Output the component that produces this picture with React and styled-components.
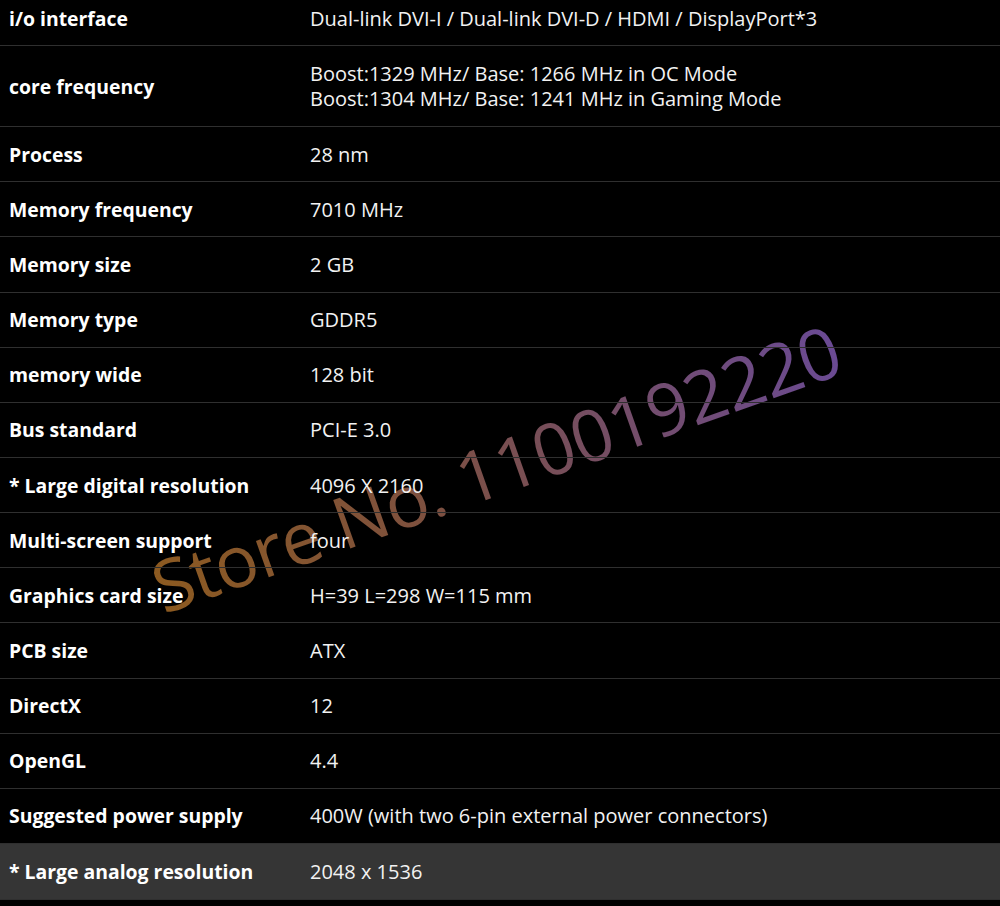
import React from "react";
import styled, { createGlobalStyle } from "styled-components";

const GlobalStyle = createGlobalStyle`
  html, body {
    margin: 0;
    padding: 0;
    background: #000;
  }
  body {
    font-family: "Open Sans", "Noto Sans", "Liberation Sans", sans-serif;
    color: #fff;
    overflow: hidden;
  }
`;

const Page = styled.div`
  position: relative;
  width: 1000px;
  height: 906px;
  overflow: hidden;
  background: #000;
`;

const Table = styled.div`
  position: relative;
  z-index: 1;
  display: flex;
  flex-direction: column;
  margin-top: -9px;
`;

const Row = styled.div`
  display: grid;
  grid-template-columns: 301px 1fr;
  align-items: center;
  min-height: ${(p) => (p.tall ? "80px" : p.shaded ? "55px" : "54.15px")};
  border-bottom: 1px solid #2f2f2f;
  background: ${(p) => (p.shaded ? "#353535" : "transparent")};
`;

const Label = styled.div`
  padding-left: 9px;
  font-size: 19.4px;
  font-weight: 700;
  color: #fff;
  white-space: nowrap;
`;

const Value = styled.div`
  padding-left: 9px;
  font-size: 20px;
  font-weight: 400;
  line-height: 25px;
  color: #f2f2f2;
  white-space: nowrap;
`;

const Watermark = styled.div`
  position: absolute;
  z-index: 0;
  left: 166px;
  top: 551px;
  font-family: "Open Sans", "Noto Sans", sans-serif;
  font-size: 72px;
  line-height: 70px;
  font-weight: 400;
  letter-spacing: -1px;
  white-space: nowrap;
  transform-origin: 0 100%;
  transform: rotate(-19.5deg);
  background: linear-gradient(90deg, #8c5a20 0%, #7d5040 40%, #6a4a94 100%);
  -webkit-background-clip: text;
  background-clip: text;
  color: transparent;
  pointer-events: none;
`;

const specs = [
  ["i/o interface", ["Dual-link DVI-I / Dual-link DVI-D / HDMI / DisplayPort*3"]],
  [
    "core frequency",
    [
      "Boost:1329 MHz/ Base: 1266 MHz in OC Mode",
      "Boost:1304 MHz/ Base: 1241 MHz in Gaming Mode",
    ],
  ],
  ["Process", ["28 nm"]],
  ["Memory frequency", ["7010 MHz"]],
  ["Memory size", ["2 GB"]],
  ["Memory type", ["GDDR5"]],
  ["memory wide", ["128 bit"]],
  ["Bus standard", ["PCI-E 3.0"]],
  ["* Large digital resolution", ["4096 X 2160"]],
  ["Multi-screen support", ["four"]],
  ["Graphics card size", ["H=39 L=298 W=115 mm"]],
  ["PCB size", ["ATX"]],
  ["DirectX", ["12"]],
  ["OpenGL", ["4.4"]],
  ["Suggested power supply", ["400W (with two 6-pin external power connectors)"]],
  ["* Large analog resolution", ["2048 x 1536"]],
];

export default function App() {
  return (
    <Page>
      <GlobalStyle />
      <Watermark>Store No. 1100192220</Watermark>
      <Table>
        {specs.map(([label, lines], i) => (
          <Row key={label} tall={lines.length > 1} shaded={i === specs.length - 1}>
            <Label>{label}</Label>
            <Value>
              {lines.map((l) => (
                <div key={l}>{l}</div>
              ))}
            </Value>
          </Row>
        ))}
      </Table>
    </Page>
  );
}
